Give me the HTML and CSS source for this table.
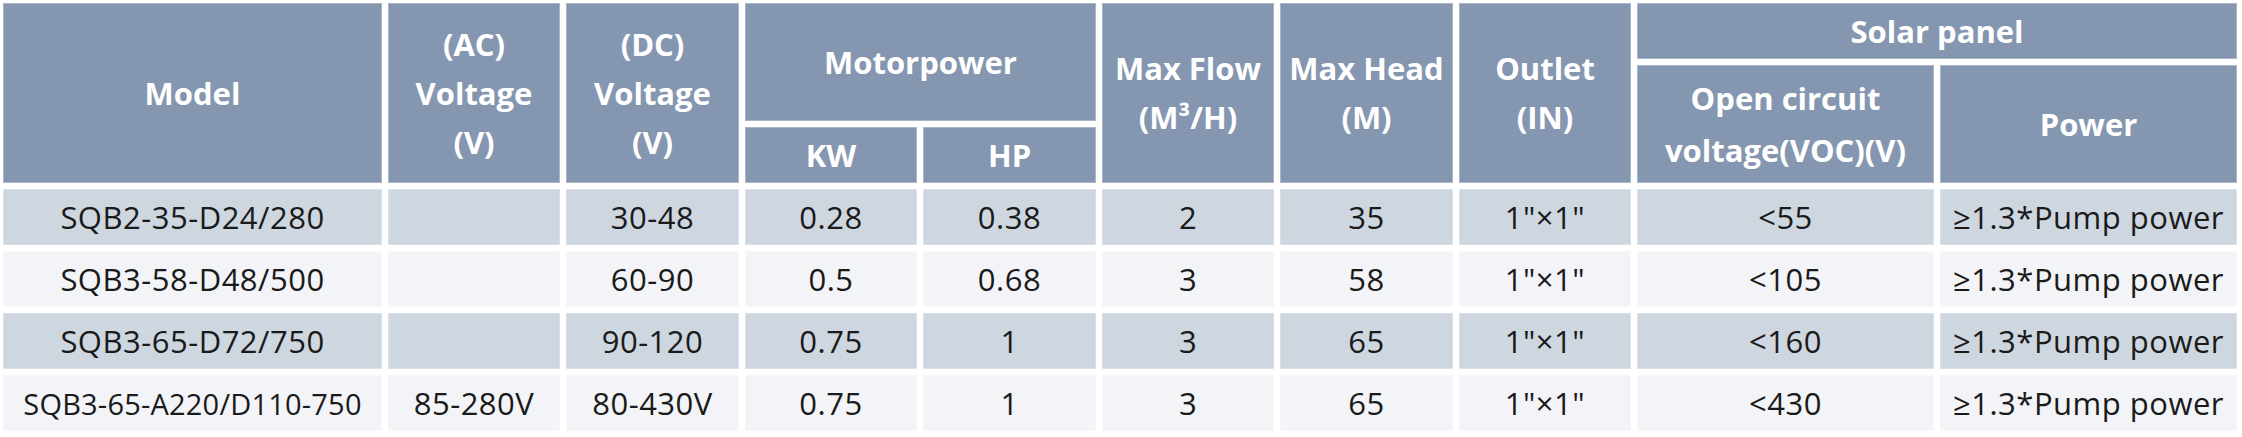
FILE: index.html
```html
<!DOCTYPE html>
<html lang="en">
<head>
<meta charset="utf-8">
<title>Solar pump specifications</title>
<link rel="stylesheet" href="styles.css">
</head>
<body>
<div class="spec">
  <div class="cell head c-model span-h3">Model</div>
  <div class="cell head c-ac span-h3">(AC)<br>Voltage<br>(V)</div>
  <div class="cell head c-dc span-h3">(DC)<br>Voltage<br>(V)</div>
  <div class="cell head c-motor">Motorpower</div>
  <div class="cell head c-flow span-h3">Max Flow<br>(M³/H)</div>
  <div class="cell head c-headm span-h3">Max Head<br>(M)</div>
  <div class="cell head c-outlet span-h3">Outlet<br>(IN)</div>
  <div class="cell head c-solar">Solar panel</div>
  <div class="cell head c-voc">Open circuit<br>voltage(VOC)(V)</div>
  <div class="cell head c-power">Power</div>
  <div class="cell head c-kw">KW</div>
  <div class="cell head c-hp">HP</div>

  <div class="cell dark">SQB2-35-D24/280</div>
  <div class="cell dark"></div>
  <div class="cell dark">30-48</div>
  <div class="cell dark">0.28</div>
  <div class="cell dark">0.38</div>
  <div class="cell dark">2</div>
  <div class="cell dark">35</div>
  <div class="cell dark">1"×1"</div>
  <div class="cell dark">&lt;55</div>
  <div class="cell dark">≥1.3*Pump power</div>

  <div class="cell light">SQB3-58-D48/500</div>
  <div class="cell light"></div>
  <div class="cell light">60-90</div>
  <div class="cell light">0.5</div>
  <div class="cell light">0.68</div>
  <div class="cell light">3</div>
  <div class="cell light">58</div>
  <div class="cell light">1"×1"</div>
  <div class="cell light">&lt;105</div>
  <div class="cell light">≥1.3*Pump power</div>

  <div class="cell dark">SQB3-65-D72/750</div>
  <div class="cell dark"></div>
  <div class="cell dark">90-120</div>
  <div class="cell dark">0.75</div>
  <div class="cell dark">1</div>
  <div class="cell dark">3</div>
  <div class="cell dark">65</div>
  <div class="cell dark">1"×1"</div>
  <div class="cell dark">&lt;160</div>
  <div class="cell dark">≥1.3*Pump power</div>

  <div class="cell light small">SQB3-65-A220/D110-750</div>
  <div class="cell light">85-280V</div>
  <div class="cell light">80-430V</div>
  <div class="cell light">0.75</div>
  <div class="cell light">1</div>
  <div class="cell light">3</div>
  <div class="cell light">65</div>
  <div class="cell light">1"×1"</div>
  <div class="cell light">&lt;430</div>
  <div class="cell light">≥1.3*Pump power</div>
</div>
</body>
</html>
```

FILE: styles.css
```css
html, body {
  margin: 0;
  padding: 0;
  background: #ffffff;
}

.spec {
  display: grid;
  grid-template-columns: 379px 172px 173px 172px 173px 172px 173px 172px 297px 297px;
  grid-template-rows: repeat(7, 56px);
  gap: 6px;
  padding: 3px 0 0 3px;
  font-family: "Open Sans", "Liberation Sans", sans-serif;
}

.cell {
  display: flex;
  align-items: center;
  justify-content: center;
  text-align: center;
  white-space: nowrap;
  box-sizing: border-box;
  font-size: 31px;
  color: #1a1a1a;
  letter-spacing: 0.5px;
}

.head {
  background: #8597b0;
  border: 1px solid #a9b6c8;
  color: #ffffff;
  font-weight: 700;
  font-size: 31px;
  line-height: 49px;
  letter-spacing: 0;
}

.dark {
  background: #ced6e0;
  border: 1px solid #dbe1e8;
}

.light {
  background: #f2f4f7;
  border: 1px solid #f7f8fa;
}

.small {
  font-size: 29px;
  letter-spacing: 0.2px;
}

.span-h3 { grid-row: 1 / span 3; }
.c-model { grid-column: 1; }
.c-ac { grid-column: 2; }
.c-dc { grid-column: 3; }
.c-motor { grid-column: 4 / span 2; grid-row: 1 / span 2; }
.c-kw { grid-column: 4; grid-row: 3; }
.c-hp { grid-column: 5; grid-row: 3; }
.c-flow { grid-column: 6; }
.c-headm { grid-column: 7; }
.c-outlet { grid-column: 8; }
.c-solar { grid-column: 9 / span 2; grid-row: 1; }
.c-voc { grid-column: 9; grid-row: 2 / span 2; line-height: 52px; }
.c-power { grid-column: 10; grid-row: 2 / span 2; }
```
